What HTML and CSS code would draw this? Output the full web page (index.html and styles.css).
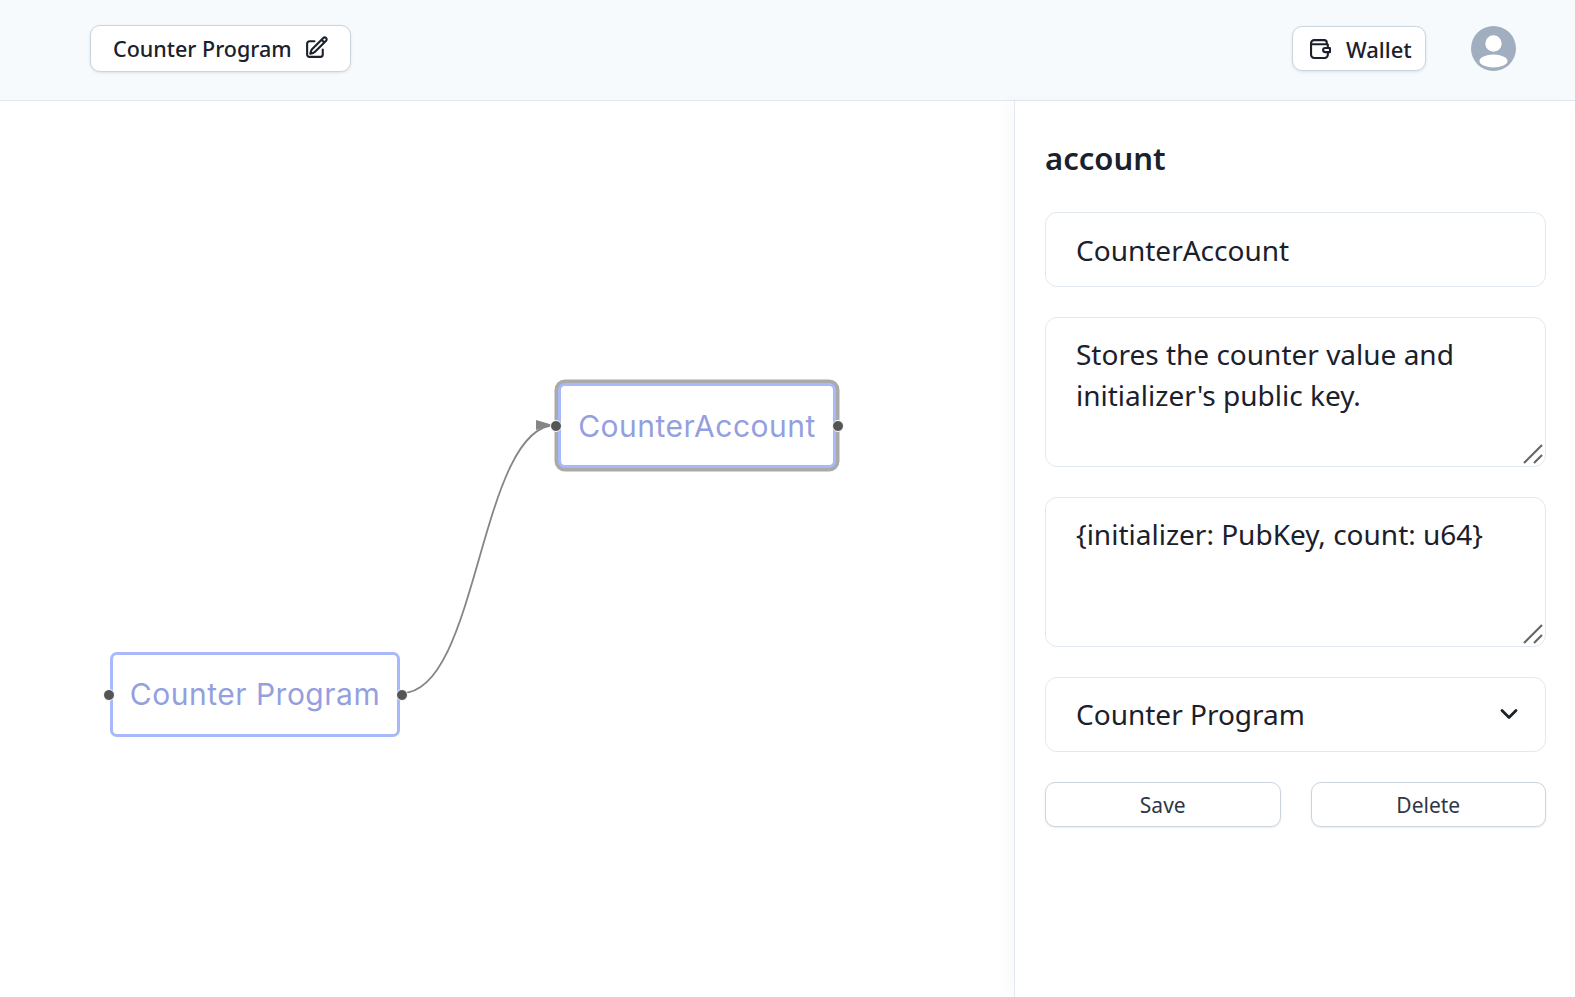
FILE: index.html
```html
<!DOCTYPE html>
<html>
<head>
  <title>Counter Program</title>
  <link rel="stylesheet" href="styles.css">
</head>
<body>

  <header class="topbar">
    <button class="title-btn" type="button">
      <span>Counter Program</span>
      <svg class="edit-icon" viewBox="0 0 24 24" fill="none" stroke="currentColor" stroke-width="2" stroke-linecap="round" stroke-linejoin="round">
        <path d="M16.862 4.487l1.687-1.688a1.875 1.875 0 112.652 2.652L10.582 16.07a4.5 4.5 0 01-1.897 1.13L6 18l.8-2.685a4.5 4.5 0 011.13-1.897l8.932-8.931zm0 0L19.5 7.125M18 14v4.75A2.25 2.25 0 0115.75 21H5.25A2.25 2.25 0 013 18.75V8.25A2.25 2.25 0 015.25 6H10"/>
      </svg>
    </button>
    <div class="topbar-right">
      <button class="wallet-btn" type="button">
        <svg class="wallet-icon" viewBox="0 0 20 19" fill="none" stroke="currentColor" stroke-width="2" stroke-linecap="round" stroke-linejoin="round">
          <path d="M16 5V3.5A2.5 2.5 0 0 0 13.5 1H4a3 3 0 0 0-3 3v11a3 3 0 0 0 3 3h10a3 3 0 0 0 3-3v-2"/>
          <path d="M1 5h15a2 2 0 0 1 1 .4V8"/>
          <path d="M14.5 8.5H19v4h-4.500a2 2 0 0 1 0-4z"/>
        </svg>
        <span>Wallet</span>
      </button>
      <svg class="avatar" viewBox="0 0 45 45">
        <defs><clipPath id="avatarClip"><circle cx="22.500" cy="22.500" r="22.500"/></clipPath></defs>
        <circle cx="22.500" cy="22.500" r="22.500" fill="#a0aec0"/>
        <g clip-path="url(#avatarClip)" fill="#fff">
          <circle cx="22.500" cy="17.500" r="8.200"/>
          <ellipse cx="22.500" cy="35" rx="14" ry="6.500"/>
        </g>
      </svg>
    </div>
  </header>

  <main class="workspace">
    <section class="canvas">
      <svg class="edges" width="1014" height="896">
        <path d="M402 592 C479 592 479 324 556 324" fill="none" stroke="#858585" stroke-width="1.800"/>
        <polygon points="536,319 553,324 536,329" fill="#858585"/>
      </svg>

      <div class="node node-account">
        CounterAccount
        <span class="handle handle-left"></span>
        <span class="handle handle-right"></span>
      </div>
      <div class="node node-program">
        Counter Program
        <span class="handle handle-left"></span>
        <span class="handle handle-right"></span>
      </div>
    </section>

    <aside class="sidebar">
      <h2 class="sidebar-title">account</h2>
      <form class="node-form">
        <input class="field" type="text" value="CounterAccount">

        <div class="area-wrap">
          <textarea class="field field-area">Stores the counter value and initializer's public key.</textarea>
          <svg class="grip" viewBox="0 0 22 22" stroke="#666" stroke-width="2.200">
            <line x1="2" y1="20" x2="20" y2="2"/>
            <line x1="12" y1="20" x2="20" y2="12"/>
          </svg>
        </div>

        <div class="area-wrap">
          <textarea class="field field-area">{initializer: PubKey, count: u64}</textarea>
          <svg class="grip" viewBox="0 0 22 22" stroke="#666" stroke-width="2.200">
            <line x1="2" y1="20" x2="20" y2="2"/>
            <line x1="12" y1="20" x2="20" y2="12"/>
          </svg>
        </div>

        <div class="select-wrap">
          <select class="field field-select">
            <option>Counter Program</option>
          </select>
          <svg class="chevron" viewBox="0 0 20 20" fill="none" stroke="#1a202c" stroke-width="2.800" stroke-linecap="round" stroke-linejoin="round">
            <path d="M3 6.500 10 13.500 17 6.500"/>
          </svg>
        </div>

        <div class="form-actions">
          <button class="action-btn" type="button">Save</button>
          <button class="action-btn" type="button">Delete</button>
        </div>
      </form>
    </aside>
  </main>

</body>
</html>
```

FILE: styles.css
```css
* {
  box-sizing: border-box;
}

html, body {
  height: 100%;
}

body {
  margin: 0;
  display: flex;
  flex-direction: column;
  overflow: hidden;
  background: #fff;
  color: #1a202c;
  font-family: "Noto Sans", "Open Sans", sans-serif;
}

button, input, textarea, select {
  font-family: inherit;
  color: inherit;
}

/* top bar */
.topbar {
  flex: none;
  height: 101px;
  padding: 0 59px 3px 90px;
  display: flex;
  align-items: center;
  justify-content: space-between;
  background: #f7fafc;
  border-bottom: 1px solid #e2e8f0;
}

.topbar-right {
  display: flex;
  align-items: center;
  gap: 45px;
}

.title-btn, .wallet-btn {
  display: flex;
  align-items: center;
  background: #fff;
  border: 1px solid #cbd5e0;
  border-radius: 10px;
  box-shadow: 0 1px 3px rgba(0, 0, 0, 0.1);
  font-weight: 500;
  white-space: nowrap;
}

.title-btn {
  width: 261px;
  height: 47px;
  padding: 0 22px;
  gap: 12px;
  font-size: 21.500px;
}

.wallet-btn {
  width: 134px;
  height: 45px;
  padding: 0 15px 0 17px;
  gap: 15px;
  font-size: 22px;
}

.edit-icon {
  width: 25px;
  height: 25px;
  margin-top: -2px;
  flex: none;
}

.wallet-icon {
  width: 21px;
  height: 20px;
  flex: none;
}

.avatar {
  width: 45px;
  height: 45px;
}

/* main area */
.workspace {
  flex: 1;
  display: flex;
  min-height: 0;
}

.canvas {
  flex: 1;
  position: relative;
  overflow: hidden;
}

.edges {
  position: absolute;
  left: 0;
  top: 0;
}

.node {
  position: absolute;
  display: flex;
  align-items: center;
  justify-content: center;
  background: #fff;
  border: 3px solid #a8b8fb;
  border-radius: 7px;
  color: #949fe0;
  font-family: Inter, "Noto Sans", sans-serif;
  font-size: 30px;
  letter-spacing: 0.500px;
  white-space: nowrap;
}

.node-account {
  left: 558px;
  top: 282px;
  width: 278px;
  height: 85px;
  box-shadow: 0 0 0 3.500px #aaaaaa;
}

.node-account .handle-left {
  left: -11.500px;
}

.node-program {
  left: 110px;
  top: 551px;
  width: 290px;
  height: 85px;
  padding-bottom: 2px;
}

.handle {
  position: absolute;
  top: 50%;
  width: 12px;
  height: 12px;
  margin-top: -6px;
  background: #555;
  border: 1.500px solid #fff;
  border-radius: 50%;
}

.handle-left {
  left: -10.500px;
}

.handle-right {
  right: -10.500px;
}

/* sidebar */
.sidebar {
  flex: none;
  width: 561px;
  padding: 30px 29px 30px 30px;
  background: #fff;
  border-left: 1px solid #e2e8f0;
  box-shadow: -8px 0 14px rgba(0, 0, 0, 0.025);
}

.sidebar-title {
  margin: 0 0 30px;
  height: 51px;
  line-height: 54px;
  font-size: 31px;
  font-weight: 600;
}

.node-form {
  display: flex;
  flex-direction: column;
  gap: 30px;
}

.field {
  display: block;
  width: 100%;
  height: 75px;
  padding: 1px 30px 0;
  background: #fff;
  border: 1px solid #e2e8f0;
  border-radius: 12px;
  outline: none;
  font-size: 28px;
  line-height: 41px;
}

.field-area {
  height: 150px;
  padding: 16px 30px;
  resize: none;
}

.field-select {
  padding: 1px 30px 2px;
  appearance: none;
}

.area-wrap, .select-wrap {
  position: relative;
}

.grip {
  position: absolute;
  right: 2px;
  bottom: 2px;
  width: 22px;
  height: 22px;
}

.chevron {
  position: absolute;
  right: 27px;
  top: 27px;
  width: 20px;
  height: 20px;
  pointer-events: none;
}

.form-actions {
  display: flex;
  gap: 30px;
}

.action-btn {
  flex: 1;
  height: 45px;
  background: #fff;
  border: 1px solid #cbd5e0;
  border-radius: 10px;
  box-shadow: 0 1px 2px rgba(0, 0, 0, 0.08);
  color: #2d3748;
  font-size: 21px;
}
```
